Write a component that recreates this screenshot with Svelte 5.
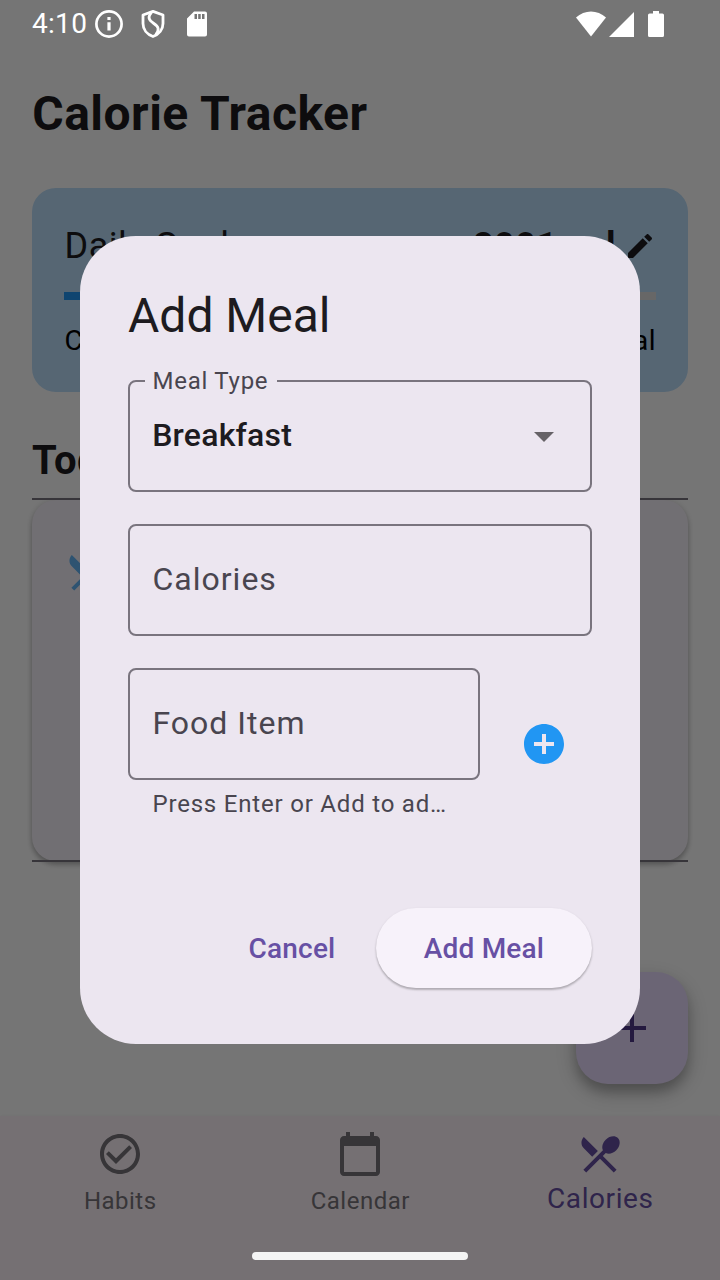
<script>
  const utensils = 'M8.1 13.34l2.83-2.83L3.91 3.5c-1.56 1.56-1.56 4.09 0 5.66l4.19 4.18zm6.78-1.81c1.53.71 3.68.21 5.27-1.38 1.91-1.91 2.28-4.65.81-6.12-1.46-1.46-4.2-1.1-6.12.81-1.59 1.59-2.09 3.74-1.38 5.27L3.7 19.87l1.41 1.41L12 14.41l6.88 6.88 1.41-1.41L13.41 13l1.47-1.47z';
  const tabs = [
    { label: 'Habits', icon: 'M16.59 7.58L10 14.17l-3.59-3.58L5 12l5 5 8-8zM12 2C6.48 2 2 6.48 2 12s4.48 10 10 10 10-4.48 10-10S17.52 2 12 2zm0 18c-4.42 0-8-3.58-8-8s3.58-8 8-8 8 3.58 8 8-3.58 8-8 8z' },
    { label: 'Calendar', icon: 'M20 3h-1V1h-2v2H7V1H5v2H4c-1.1 0-2 .9-2 2v16c0 1.1.9 2 2 2h16c1.1 0 2-.9 2-2V5c0-1.1-.9-2-2-2zm0 18H4V8h16v13z' },
    { label: 'Calories', icon: utensils, active: true }
  ];
</script>

<div class="screen">
  <main>
    <h1>Calorie Tracker</h1>
    <section class="goal">
      <div class="row">
        <span class="goal-name">Daily Goal</span>
        <span class="goal-value">2001 cal</span>
        <svg width="32" height="32" viewBox="0 0 24 24"><path d="M3 17.25V21h3.75L17.81 9.94l-3.75-3.75L3 17.25zM20.71 7.04c.39-.39.39-1.02 0-1.41l-2.34-2.34c-.39-.39-1.02-.39-1.41 0l-1.83 1.83 3.75 3.75 1.83-1.83z" /></svg>
      </div>
      <div class="track"><div class="fill"></div></div>
      <div class="row small"><span>C</span><span>cal</span></div>
    </section>
    <h2>Today</h2>
    <div class="list">
      <div class="meal">
        <svg width="48" height="48" viewBox="0 0 24 24"><path d={utensils} /></svg>
      </div>
    </div>
  </main>

  <div class="fab"><svg width="48" height="48" viewBox="0 0 24 24"><path d="M19 13h-6v6h-2v-6H5v-2h6V5h2v6h6v2z" /></svg></div>

  <nav>
    {#each tabs as tab}
      <div class="tab" class:active={tab.active}>
        <svg width="48" height="48" viewBox="0 0 24 24"><path d={tab.icon} /></svg>
        <span>{tab.label}</span>
      </div>
    {/each}
  </nav>

  <div class="scrim">
    <div class="dialog">
      <div class="title">Add Meal</div>
      <div class="field">
        <span class="floating">Meal Type</span>
        <span class="value">Breakfast</span>
        <svg width="48" height="48" viewBox="0 0 24 24"><path d="M7 10l5 5 5-5z" /></svg>
      </div>
      <div class="field"><span class="hint">Calories</span></div>
      <div class="food">
        <div class="food-col">
          <div class="field"><span class="hint">Food Item</span></div>
          <div class="helper">Press Enter or Add to ad…</div>
        </div>
        <div class="add"><svg width="48" height="48" viewBox="0 0 24 24"><path d="M12 2C6.48 2 2 6.48 2 12s4.48 10 10 10 10-4.48 10-10S17.52 2 12 2zm5 11h-4v4h-2v-4H7v-2h4V7h2v4h4v2z" /></svg></div>
      </div>
      <div class="actions">
        <button class="cancel">Cancel</button>
        <button class="confirm">Add Meal</button>
      </div>
    </div>
  </div>

  <header class="status">
    <span>4:10</span>
    <svg class="info" width="28" height="28" viewBox="0 0 28 28"><circle cx="14" cy="14" r="12.6" fill="none" stroke="#fff" stroke-width="2.7" /><path d="M12.4 7h3.2v3h-3.200zM12.400 12.200h3.200v8.400h-3.200z" /></svg>
    <svg class="shield" width="24" height="28" viewBox="0 0 24 28"><path d="M12 1.400L22 5v8.500c0 6-4 11-10 13C6 24.500 2 19.500 2 13.500V5z" /><path d="M10.500 2.400C6.500 7 7.500 10 12.500 13.200C18 16.700 18.500 20 14.800 24.600" /></svg>
    <svg class="sd" width="20" height="26" viewBox="0 0 20 26"><path fill-rule="evenodd" d="M7 .5h11a2 2 0 0 1 2 2v21a2 2 0 0 1-2 2H2a2 2 0 0 1-2-2V7.500zM7.500 3v5H10V3zM11.200 3v5h2.500V3zM15 3v5h2.500V3z" /></svg>
    <svg class="wifi" width="30" height="26" viewBox="0 0 30 26"><path d="M0 6.500C8.500-1.500 21.500-1.500 30 6.500L15 25.500z" /></svg>
    <svg class="signal" width="25" height="25" viewBox="0 0 25 25"><path d="M25 0v25H0z" /></svg>
    <svg class="battery" width="16" height="26" viewBox="0 0 16 26"><path d="M5 0h6v2.500h3.400A1.600 1.600 0 0 1 16 4.100v20.300a1.600 1.600 0 0 1-1.600 1.600H1.600A1.600 1.600 0 0 1 0 24.400V4.100a1.600 1.600 0 0 1 1.600-1.600H5z" /></svg>
  </header>
  <div class="handle"></div>
</div>

<style>
  .screen { position: relative; width: 720px; height: 1280px; overflow: hidden; background: #fff; font-family: Roboto, sans-serif; color: #1d1b20; display: flex; flex-direction: column; }
  .screen *, .screen { box-sizing: border-box; }
  svg { display: block; flex: none; fill: currentColor; }
  main { flex: 1; padding: 84px 32px 0; min-height: 0; }
  h1 { margin: 0; font-size: 48px; line-height: 60px; font-weight: 700; letter-spacing: .48px; text-indent: .3px; }
  .goal { margin-top: 44px; height: 204px; padding: 32px; border-radius: 24px; background: #bbdefb; }
  .row { display: flex; align-items: center; height: 52px; }
  .goal-name { flex: 1; font-size: 36px; letter-spacing: .5px; text-indent: .5px; }
  .goal-value { font-size: 36px; font-weight: 700; letter-spacing: .5px; margin-right: 8px; }
  .track { height: 8px; margin-top: 20px; background: #e0e0e0; }
  .fill { width: 30%; height: 8px; background: #2196f3; }
  .small { height: 40px; margin-top: 20px; justify-content: space-between; font-size: 28px; letter-spacing: .5px; text-indent: .5px; color: #000; }
  h2 { margin: 44px 0 0; height: 62px; line-height: 50px; font-size: 40px; font-weight: 700; letter-spacing: .5px; }
  .list { position: relative; height: 364px; padding: 2px 0; }
  .list::after { content: ''; position: absolute; inset: 0; border: solid #79747e; border-width: 2px 0; }
  .meal { height: 361px; border-radius: 24px; padding: 48px 32px; background: #f7f2fa; color: #64b5f6; box-shadow: 0 4px 5px rgba(0,0,0,.2), 0 1px 6px rgba(0,0,0,.16); }
  .fab { position: absolute; left: 576px; top: 972px; width: 112px; height: 112px; border-radius: 32px; background: #eaddff; color: #4f378a; display: grid; place-items: center; box-shadow: 0 8px 12px rgba(0,0,0,.22), 0 8px 24px rgba(0,0,0,.18); }
  nav { height: 164px; display: flex; background: #fff5fb; color: #78747a; box-shadow: 0 0 3px rgba(0,0,0,.05); }
  .tab { flex: 1; display: flex; flex-direction: column; align-items: center; padding-top: 14px; font-size: 24px; letter-spacing: .5px; }
  .tab span { line-height: 28px; margin-top: 9px; padding-left: .5px; }
  .tab.active { color: #6750a4; font-size: 28px; letter-spacing: .58px; }
  .tab.active span { margin-top: 7px; }
  .scrim { position: absolute; inset: 0; background: rgba(0,0,0,.54); padding: 236px 80px; }
  .dialog { height: 808px; border-radius: 56px; background: #ece6f0; padding: 48px; }
  .title { font-size: 48px; line-height: 64px; margin-bottom: 32px; }
  .field { position: relative; height: 112px; margin-bottom: 32px; border: 2px solid #79747e; border-radius: 8px; padding: 0 22px; display: flex; align-items: center; justify-content: space-between; font-size: 32px; letter-spacing: 1px; color: #49454f; }
  .floating { position: absolute; left: 15px; top: -16px; width: 132px; padding-left: 7.5px; font-size: 24px; line-height: 30px; letter-spacing: .75px; background: #ece6f0; white-space: nowrap; }
  .value, .hint { padding-bottom: 2px; text-indent: .5px; }
  .value { font-weight: 500; letter-spacing: .22px; text-indent: .2px; color: #1d1b20; }
  .field svg { color: #666267; }
  .food { display: flex; justify-content: space-between; }
  .food-col { width: 352px; }
  .food .field { margin: 0; }
  .helper { padding: 8px 0 0 24.5px; font-size: 24px; line-height: 32px; letter-spacing: .8px; color: #49454f; white-space: nowrap; }
  .add { padding: 52px 24px 0 0; color: #2196f3; }
  .actions { display: flex; justify-content: flex-end; margin-top: 88px; gap: 16px; }
  button { height: 80px; padding: 0; border: 0; border-radius: 40px; font: 500 28px Roboto, sans-serif; letter-spacing: .2px; color: #6750a4; background: none; }
  .cancel { width: 136px; }
  .confirm { width: 216px; background: #f7f2fa; box-shadow: 0 2px 2px rgba(0,0,0,.2), 0 1px 3px rgba(0,0,0,.1); }
  .status { position: absolute; left: 0; top: 0; width: 720px; height: 48px; padding: 0 56px 0 32px; display: flex; align-items: center; font-size: 28px; color: #fff; }
  .status span { width: 63px; padding-bottom: 2px; letter-spacing: .3px; }
  .shield { margin-left: 18px; fill: none; stroke: #fff; stroke-width: 2.8; stroke-linejoin: round; }
  .sd { margin-left: 22px; }
  .wifi { margin-left: auto; }
  .signal { margin-left: 3px; }
  .battery { margin-left: 14px; }
  .handle { position: absolute; left: 252px; top: 1252px; width: 216px; height: 8px; border-radius: 4px; background: #f4f4f4; }
</style>
